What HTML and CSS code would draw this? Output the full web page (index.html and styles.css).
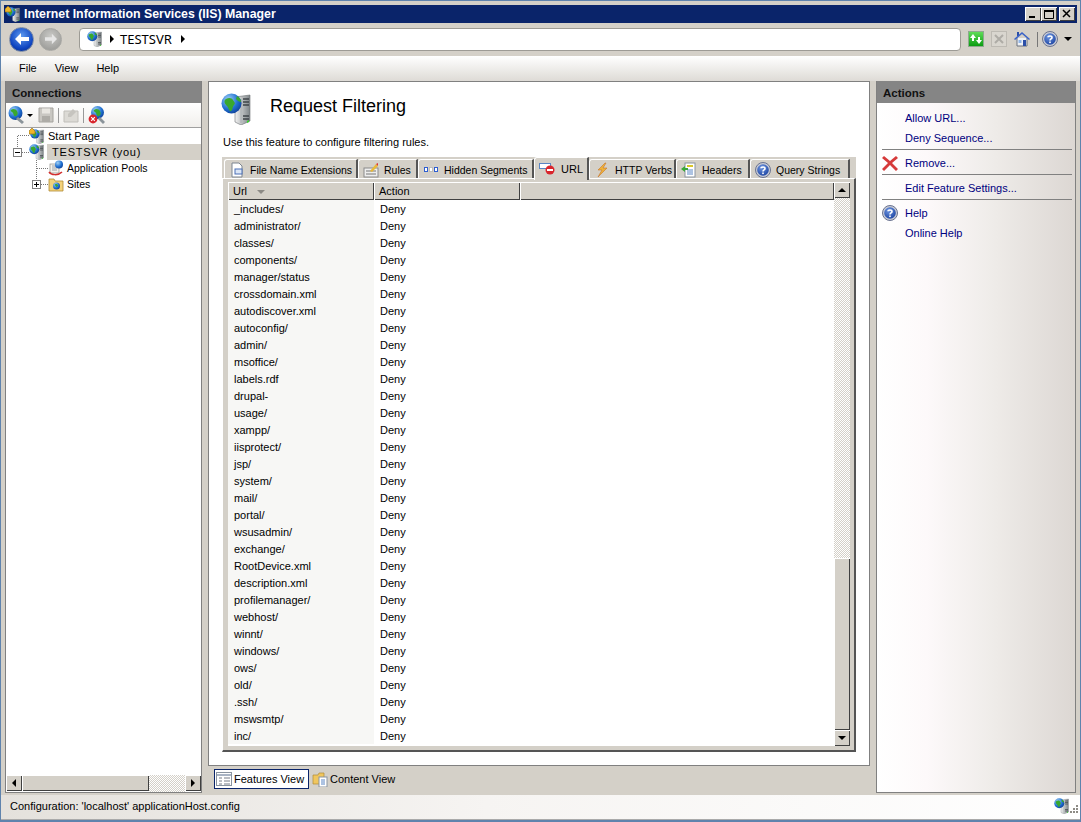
FILE: index.html
```html
<!DOCTYPE html>
<html lang="en">
<head>
    <meta charset="UTF-8">
    <title>Internet Information Services (IIS) Manager</title>
    <link rel="stylesheet" href="styles.css">
</head>
<body>
    <!-- Shared icons -->
    <svg class="icon-defs" width="0" height="0">
        <defs>
            <linearGradient id="serverFill" x1="0" x2="1" y1="0" y2="0">
                <stop offset="0" stop-color="#f2f2f2"/>
                <stop offset="1" stop-color="#7d8487"/>
            </linearGradient>
            <radialGradient id="globeFill" cx="0.35" cy="0.3" r="0.8">
                <stop offset="0" stop-color="#9fd0f5"/>
                <stop offset="0.6" stop-color="#1f6fd0"/>
                <stop offset="1" stop-color="#0c3a90"/>
            </radialGradient>
            <radialGradient id="blueBall" cx="0.4" cy="0.3" r="0.8">
                <stop offset="0" stop-color="#6f96e0"/>
                <stop offset="1" stop-color="#173f9e"/>
            </radialGradient>
            <symbol id="i-server" viewBox="0 0 32 32">
                <path d="M14 4l15-2v26l-9 4-6-3z" fill="url(#serverFill)" stroke="#6b7073" stroke-width=".6"/>
                <path d="M22 6h6M22 9h6M22 12h6M22 23h6M22 26h6" stroke="#3e4448" stroke-width="1.4"/>
                <path d="M20 6v24" stroke="#aab0b3"/>
                <circle cx="10.5" cy="10.5" r="10" fill="url(#globeFill)"/>
                <path d="M5 6c3-2 6-1 7 1s3 3 1 5-1 5-3 6-2-3-4-5-4-5-1-7zM16 3c2 1 4 3 4 6-2 0-4-2-5-3z" fill="#39a82e"/>
                <path d="M26 28l2-1v2l-2 1z" fill="#39d02e"/>
            </symbol>
            <symbol id="i-startpage" viewBox="0 0 16 16">
                <use href="#i-server" x="1" y="1" width="15" height="15"/>
                <path d="M0 3l3-3 3 3v3H0z" fill="#f0b52a" stroke="#8a6a1a" stroke-width=".6"/>
            </symbol>
            <symbol id="i-connect" viewBox="0 0 18 18">
                <circle cx="7.5" cy="7" r="7" fill="url(#globeFill)"/>
                <path d="M3 4c2-2 5-1 6 1s1 4-1 5-2-1-3-3-3-1-2-3z" fill="#39a82e"/>
                <path d="M10 11l6 5-2 2-6-5z" fill="#8b949a"/>
            </symbol>
            <symbol id="i-disconnect" viewBox="0 0 18 18">
                <circle cx="9.5" cy="6.5" r="6.5" fill="url(#globeFill)"/>
                <path d="M6 4c2-2 5-1 6 1s1 4-1 5-2-1-3-3-3-1-2-3z" fill="#39a82e"/>
                <path d="M12 11l5 5-2 2-5-5z" fill="#8b949a"/>
                <circle cx="5" cy="13" r="4.4" fill="#d8252c"/>
                <path d="M3.2 11.2l3.6 3.6m0-3.6l-3.6 3.6" stroke="#fff" stroke-width="1.2"/>
            </symbol>
            <symbol id="i-help" viewBox="0 0 16 16">
                <circle cx="8" cy="8" r="7.5" fill="#c9ccd6" stroke="#6a7390"/>
                <circle cx="8" cy="8" r="5.8" fill="url(#blueBall)"/>
                <path d="M6 6.2C6 4.6 10 4.4 10 6.4 10 8 8 7.800 8 9.500" fill="none" stroke="#fff" stroke-width="1.6"/>
                <rect x="7.200" y="10.500" width="1.600" height="1.600" fill="#fff"/>
            </symbol>
            <symbol id="i-apppools" viewBox="0 0 16 16">
                <rect x="2" y="4" width="9" height="9" fill="#f4f2ec" stroke="#8d8d88" stroke-width=".7"/>
                <path d="M4 6h5M4 8h5M4 10h5" stroke="#9aa3ad"/>
                <circle cx="11" cy="4.500" r="4" fill="url(#globeFill)"/>
                <path d="M1 12c2 3 9 4 13 0" fill="none" stroke="#d32f2f" stroke-width="1.500"/>
            </symbol>
            <symbol id="i-sites" viewBox="0 0 16 16">
                <path d="M1 3h5l1 2h8v10H1z" fill="#f3d27b" stroke="#b08a35" stroke-width=".8"/>
                <circle cx="8.500" cy="10" r="3.500" fill="url(#globeFill)"/>
                <path d="M7 8.500c1-1 3 0 3 1s-2 2-2 1-2-1-1-2z" fill="#39a82e"/>
            </symbol>
        </defs>
    </svg>

    <div class="window">
        <header class="title-bar">
            <svg class="title-icon"><use href="#i-startpage"/></svg>
            <span class="title-text">Internet Information Services (IIS) Manager</span>
            <div class="window-buttons">
                <button class="win-btn"><svg width="10" height="10"><rect x="1" y="7" width="6" height="2" fill="#000"/></svg></button>
                <button class="win-btn"><svg width="12" height="10"><path d="M1.500 1.500h9v8h-9z" fill="none" stroke="#000"/><rect x="1" y="1" width="10" height="2"/></svg></button>
                <button class="win-btn win-close"><svg width="10" height="10"><path d="M1 1l7 7m0-7L1 8" stroke="#000" stroke-width="1.500"/></svg></button>
            </div>
        </header>

        <div class="nav-bar">
            <div class="nav-arrows">
                <div class="nav-round nav-back">
                    <svg width="16" height="14" viewBox="0 0 16 14"><path d="M7 1L1 7l6 6V9h8V5H7z" fill="#fff"/></svg>
                </div>
                <div class="nav-round nav-forward">
                    <svg width="14" height="12" viewBox="0 0 16 14"><path d="M9 1l6 6-6 6V9H1V5h8z" fill="#e6e6e6"/></svg>
                </div>
            </div>
            <div class="address">
                <svg class="icon16"><use href="#i-server"/></svg>
                <span class="crumb-arrow"></span>
                <span class="crumb">TESTSVR</span>
                <span class="crumb-arrow"></span>
            </div>
            <div class="nav-tools">
                <div class="tool-refresh">
                    <svg width="14" height="12" viewBox="0 0 14 12"><path d="M1 5l3-4 3 4H5v3H3V5zM7 7h2V4h2v3h2l-3 4z" fill="#fff"/></svg>
                </div>
                <div class="tool-stop">
                    <svg width="10" height="10"><path d="M1 1l8 8m0-8L1 9" stroke="#aeaca6" stroke-width="2"/></svg>
                </div>
                <svg class="tool-home" width="16" height="16" viewBox="0 0 16 16">
                    <rect x="3" y="1" width="2" height="4" fill="#2b4fa8"/>
                    <path d="M3 7v8h10V7" fill="#eef1f6" stroke="#68717f"/>
                    <path d="M0 8l8-7 8 7-1 1-7-6-7 6z" fill="#3a62c8"/>
                    <rect x="9" y="9" width="3" height="6" fill="#2b4fa8"/>
                    <rect x="4.500" y="9" width="3" height="3" fill="#8fb5e8"/>
                </svg>
                <span class="tool-sep"></span>
                <svg class="icon16"><use href="#i-help"/></svg>
                <span class="caret-down"></span>
            </div>
        </div>

        <nav class="menu-bar">
            <span class="menu-item">File</span>
            <span class="menu-item">View</span>
            <span class="menu-item">Help</span>
        </nav>

        <div class="main">
            <aside class="connections">
                <h2 class="panel-head">Connections</h2>
                <div class="conn-toolbar">
                    <svg class="conn-icon"><use href="#i-connect"/></svg>
                    <span class="caret-down caret-small"></span>
                    <svg class="save-icon" width="16" height="16" viewBox="0 0 16 16">
                        <path d="M1 1h14v14H1z" fill="#c9c7c2" stroke="#a5a39e"/>
                        <rect x="4" y="1.500" width="8" height="5" fill="#e8e6e1"/>
                        <rect x="4" y="9" width="8" height="6" fill="#aeaca7"/>
                    </svg>
                    <span class="conn-sep"></span>
                    <svg class="save-icon" width="16" height="16" viewBox="0 0 16 16">
                        <path d="M1 4h14v11H1z" fill="#dcdad5" stroke="#c0beb9"/>
                        <path d="M5 7l5-5 3 3-5 5H5z" fill="#c6c4bf"/>
                    </svg>
                    <span class="conn-sep"></span>
                    <svg class="conn-icon"><use href="#i-disconnect"/></svg>
                </div>
                <div class="tree">
                    <div class="tree-row">
                        <svg class="tree-gutter" width="23" height="16"><path d="M11.500 8v8M12 7.500h11" stroke="#777" stroke-dasharray="1 1"/></svg>
                        <svg class="icon16"><use href="#i-startpage"/></svg>
                        <span class="tree-label">Start Page</span>
                    </div>
                    <div class="tree-row">
                        <svg class="tree-gutter" width="23" height="16">
                            <path d="M11.500 0v4M16 8.500h7" stroke="#777" stroke-dasharray="1 1"/>
                            <rect x="7.500" y="4.500" width="8" height="8" fill="#fff" stroke="#808080"/>
                            <path d="M9 8.500h5" stroke="#000"/>
                        </svg>
                        <svg class="icon16"><use href="#i-server"/></svg>
                        <span class="tree-label tree-selected">TESTSVR (you)</span>
                    </div>
                    <div class="tree-row">
                        <svg class="tree-gutter" width="42" height="16"><path d="M30.500 0v16M31 8.500h11" stroke="#777" stroke-dasharray="1 1"/></svg>
                        <svg class="icon16"><use href="#i-apppools"/></svg>
                        <span class="tree-label">Application Pools</span>
                    </div>
                    <div class="tree-row">
                        <svg class="tree-gutter" width="42" height="16">
                            <path d="M30.500 0v4M35 8.500h7" stroke="#777" stroke-dasharray="1 1"/>
                            <rect x="26.500" y="4.500" width="8" height="8" fill="#fff" stroke="#808080"/>
                            <path d="M28 8.500h5M30.500 6v5" stroke="#000"/>
                        </svg>
                        <svg class="icon16"><use href="#i-sites"/></svg>
                        <span class="tree-label">Sites</span>
                    </div>
                </div>
                <div class="hscroll">
                    <span class="sb-btn"><span class="arrow-left"></span></span>
                    <span class="hscroll-thumb"></span>
                    <span class="sb-track"></span>
                    <span class="sb-btn"><span class="arrow-right"></span></span>
                </div>
            </aside>

            <div class="center">
                <section class="feature">
                    <div class="feature-head">
                        <svg class="feature-icon"><use href="#i-server"/></svg>
                        <h1>Request Filtering</h1>
                    </div>
                    <p class="feature-desc">Use this feature to configure filtering rules.</p>
                    <div class="tabs">
                        <div class="tab">
                            <svg class="icon16" viewBox="0 0 16 16"><path d="M3 1h7l3 3v11H3z" fill="#fff" stroke="#7d8590"/><rect x="6" y="7" width="7" height="5" fill="#dbe6f6" stroke="#4a6fb5"/></svg>
                            File Name Extensions
                        </div>
                        <div class="tab">
                            <svg class="icon16" viewBox="0 0 16 16"><rect x="1" y="6" width="14" height="9" fill="#eee" stroke="#8a8a8a"/><path d="M3 9h10M3 12h10" stroke="#777"/><path d="M7 9l6-7 2 2-6 6z" fill="#e8b93a"/><path d="M13 2l2-1v3z" fill="#d33"/></svg>
                            Rules
                        </div>
                        <div class="tab">
                            <svg class="icon16" viewBox="0 0 16 16"><rect x="1.500" y="5.500" width="3" height="4" fill="#fff" stroke="#2f5fd0"/><rect x="6.500" y="5.500" width="3" height="4" fill="#fff" stroke="#999" stroke-dasharray="1 1"/><rect x="11.500" y="5.500" width="3" height="4" fill="#fff" stroke="#2f5fd0"/></svg>
                            Hidden Segments
                        </div>
                        <div class="tab tab-active">
                            <svg class="icon16" viewBox="0 0 16 16"><rect x="0.500" y="2.500" width="11" height="5" fill="#fff" stroke="#5a86c5"/><circle cx="11" cy="9" r="4.500" fill="#d9252c"/><rect x="8" y="8" width="6" height="2" fill="#fff"/></svg>
                            URL
                        </div>
                        <div class="tab">
                            <svg class="icon16" viewBox="0 0 16 16"><path d="M11 1L4 8h4l-4 7 9-9H9l3-5z" fill="#eeb33a" stroke="#c9752a" stroke-width=".6"/></svg>
                            HTTP Verbs
                        </div>
                        <div class="tab">
                            <svg class="icon16" viewBox="0 0 16 16"><rect x="4" y="1" width="10" height="14" fill="#fff" stroke="#8a94a0"/><path d="M6 4h6" stroke="#d9c62a" stroke-width="2"/><path d="M6 8h6M6 10h6M6 12h6" stroke="#5a86c5"/><path d="M0 7l4-3v2h3v2H4v2z" fill="#3aa83a"/></svg>
                            Headers
                        </div>
                        <div class="tab">
                            <svg class="icon16"><use href="#i-help"/></svg>
                            Query Strings
                        </div>
                    </div>
                    <div class="tab-body">
                        <div class="list">
                            <div class="list-main">
                                <table class="rules">
                                    <thead>
                                        <tr>
                                            <th class="col-url">Url <span class="sort-arrow"></span></th>
                                            <th class="col-action">Action</th>
                                            <th></th>
                                        </tr>
                                    </thead>
                                    <tbody>
                                        <tr><td class="col-url">_includes/</td><td>Deny</td><td></td></tr>
                                        <tr><td class="col-url">administrator/</td><td>Deny</td><td></td></tr>
                                        <tr><td class="col-url">classes/</td><td>Deny</td><td></td></tr>
                                        <tr><td class="col-url">components/</td><td>Deny</td><td></td></tr>
                                        <tr><td class="col-url">manager/status</td><td>Deny</td><td></td></tr>
                                        <tr><td class="col-url">crossdomain.xml</td><td>Deny</td><td></td></tr>
                                        <tr><td class="col-url">autodiscover.xml</td><td>Deny</td><td></td></tr>
                                        <tr><td class="col-url">autoconfig/</td><td>Deny</td><td></td></tr>
                                        <tr><td class="col-url">admin/</td><td>Deny</td><td></td></tr>
                                        <tr><td class="col-url">msoffice/</td><td>Deny</td><td></td></tr>
                                        <tr><td class="col-url">labels.rdf</td><td>Deny</td><td></td></tr>
                                        <tr><td class="col-url">drupal-</td><td>Deny</td><td></td></tr>
                                        <tr><td class="col-url">usage/</td><td>Deny</td><td></td></tr>
                                        <tr><td class="col-url">xampp/</td><td>Deny</td><td></td></tr>
                                        <tr><td class="col-url">iisprotect/</td><td>Deny</td><td></td></tr>
                                        <tr><td class="col-url">jsp/</td><td>Deny</td><td></td></tr>
                                        <tr><td class="col-url">system/</td><td>Deny</td><td></td></tr>
                                        <tr><td class="col-url">mail/</td><td>Deny</td><td></td></tr>
                                        <tr><td class="col-url">portal/</td><td>Deny</td><td></td></tr>
                                        <tr><td class="col-url">wsusadmin/</td><td>Deny</td><td></td></tr>
                                        <tr><td class="col-url">exchange/</td><td>Deny</td><td></td></tr>
                                        <tr><td class="col-url">RootDevice.xml</td><td>Deny</td><td></td></tr>
                                        <tr><td class="col-url">description.xml</td><td>Deny</td><td></td></tr>
                                        <tr><td class="col-url">profilemanager/</td><td>Deny</td><td></td></tr>
                                        <tr><td class="col-url">webhost/</td><td>Deny</td><td></td></tr>
                                        <tr><td class="col-url">winnt/</td><td>Deny</td><td></td></tr>
                                        <tr><td class="col-url">windows/</td><td>Deny</td><td></td></tr>
                                        <tr><td class="col-url">ows/</td><td>Deny</td><td></td></tr>
                                        <tr><td class="col-url">old/</td><td>Deny</td><td></td></tr>
                                        <tr><td class="col-url">.ssh/</td><td>Deny</td><td></td></tr>
                                        <tr><td class="col-url">mswsmtp/</td><td>Deny</td><td></td></tr>
                                        <tr><td class="col-url">inc/</td><td>Deny</td><td></td></tr>
                                    </tbody>
                                </table>
                            </div>
                            <div class="vscroll">
                                <span class="sb-btn"><span class="arrow-up"></span></span>
                                <span class="sb-track"></span>
                                <span class="vscroll-thumb"></span>
                                <span class="sb-btn"><span class="arrow-down"></span></span>
                            </div>
                        </div>
                    </div>
                </section>
                <div class="view-tabs">
                    <div class="view-tab view-tab-active">
                        <svg class="icon16" viewBox="0 0 16 16"><rect x="0.500" y="1.500" width="15" height="13" fill="#fff" stroke="#8a94a0"/><path d="M1 4h14" stroke="#a9b4c4" stroke-width="2"/><path d="M3 7h3M3 10h3M3 13h3M8 7h6M8 10h6M8 13h6" stroke="#767d88"/></svg>
                        Features View
                    </div>
                    <div class="view-tab">
                        <svg class="icon16" viewBox="0 0 16 16"><path d="M1 4h5l1-2h5v11H1z" fill="#f0c65e" stroke="#b08a35" stroke-width=".7"/><rect x="7" y="6" width="8" height="10" fill="#fff" stroke="#8a94a0"/><path d="M9 9h4M9 11h4M9 13h4" stroke="#5a86c5"/></svg>
                        Content View
                    </div>
                </div>
            </div>

            <aside class="actions">
                <h2 class="panel-head">Actions</h2>
                <ul class="action-list">
                    <li class="action">Allow URL...</li>
                    <li class="action">Deny Sequence...</li>
                    <li class="action-sep"></li>
                    <li class="action">
                        <svg class="action-icon" viewBox="0 0 16 16"><path d="M2 1l6 5 6-5 2 2-6 5 6 6-2 2-6-6-6 6-2-2 6-6-6-5z" fill="#d63a3a"/></svg>
                        Remove...
                    </li>
                    <li class="action-sep"></li>
                    <li class="action">Edit Feature Settings...</li>
                    <li class="action-sep"></li>
                    <li class="action">
                        <svg class="action-icon"><use href="#i-help"/></svg>
                        Help
                    </li>
                    <li class="action">Online Help</li>
                </ul>
            </aside>
        </div>

        <footer class="status-bar">
            <span class="status-text">Configuration: 'localhost' applicationHost.config</span>
            <svg class="icon16"><use href="#i-server"/></svg>
            <svg class="grip" width="9" height="10"><path d="M6 1h2v2H6zM3 4h2v2H3zM6 4h2v2H6zM0 7h2v2H0zM3 7h2v2H3zM6 7h2v2H6z" fill="#8e8c86"/></svg>
        </footer>
    </div>
</body>
</html>
```

FILE: styles.css
```css
:root {
    --face: #d4d0c8;
    --head: #858585;
    --line: #808080;
    --dark: #404040;
    --navy: #0a246a;
    --link: #000080;
}

* {
    box-sizing: border-box;
}

html, body {
    margin: 0;
    padding: 0;
}

body {
    font-family: "Liberation Sans", Arial, sans-serif;
    font-size: 11px;
    line-height: 16px;
    color: #000;
}

.icon-defs {
    position: absolute;
}

.icon16 {
    width: 16px;
    height: 16px;
    flex: none;
}

.window {
    width: 1081px;
    height: 822px;
    padding: 4px 3px 0;
    background: var(--face);
    border: 1px solid #5f83ad;
    border-bottom-width: 2px;
    display: flex;
    flex-direction: column;
    overflow: hidden;
}

/* Title bar */
.title-bar {
    height: 18px;
    flex: none;
    background: var(--navy);
    color: #fff;
    display: flex;
    align-items: center;
}

.title-icon {
    width: 16px;
    height: 16px;
    margin: 0 3px 0 1px;
}

.title-text {
    font-weight: bold;
    font-size: 12.350px;
    flex: 1;
}

.window-buttons {
    display: flex;
    padding-right: 2px;
}

.win-btn {
    width: 16px;
    height: 14px;
    padding: 0;
    border: none;
    background: var(--face);
    box-shadow: inset 1px 1px #fff, inset -1px -1px #404040;
    display: flex;
    align-items: center;
    justify-content: center;
}

.win-close {
    margin-left: 2px;
}

/* Back/forward and address */
.nav-bar {
    height: 33px;
    flex: none;
    display: flex;
    align-items: center;
    padding: 0 0 1px 5px;
}

.nav-arrows {
    width: 70px;
    display: flex;
    align-items: center;
}

.nav-round {
    border-radius: 50%;
    display: flex;
    align-items: center;
    justify-content: center;
}

.nav-back {
    width: 25px;
    height: 25px;
    background: radial-gradient(circle at 50% 35%, #5f9bf0, #0e44c0 65%, #0a2a78);
    border: 1px solid #7c8ba5;
}

.nav-forward {
    width: 23px;
    height: 23px;
    margin-left: 5px;
    background: radial-gradient(circle at 50% 35%, #c9c9c6, #92928f);
    border: 1px solid #a7a7a3;
}

.address {
    width: 882px;
    height: 23px;
    background: #fff;
    border: 1px solid #9d9b95;
    border-radius: 4px;
    display: flex;
    align-items: center;
    padding-left: 7px;
    font-family: "Noto Sans", sans-serif;
    font-size: 13px;
}

.crumb {
    margin-right: 9px;
}

.crumb-arrow {
    width: 0;
    height: 0;
    margin: 0 6px 0 7px;
    border-left: 4px solid #000;
    border-top: 4px solid transparent;
    border-bottom: 4px solid transparent;
}

.crumb + .crumb-arrow {
    margin-left: 0;
}

.nav-tools {
    flex: 1;
    display: flex;
    align-items: center;
    padding-left: 7px;
}

.tool-refresh, .tool-stop {
    width: 16px;
    height: 16px;
    display: flex;
    align-items: center;
    justify-content: center;
    margin-right: 7px;
}

.tool-refresh {
    background: linear-gradient(#5fdc58, #0c9c12);
    border: 1px solid #8fa88f;
}

.tool-stop {
    background: #d9d6cf;
    border: 1px solid #bdbab3;
}

.tool-sep {
    width: 1px;
    height: 15px;
    background: #777;
    margin: 0 4px 0 7px;
}

.caret-down {
    width: 0;
    height: 0;
    margin-left: 6px;
    border-top: 4px solid #000;
    border-left: 4px solid transparent;
    border-right: 4px solid transparent;
}

.caret-small {
    margin: 0 5px 0 1px;
    border-width: 3px 3px 0;
}

/* Menu */
.menu-bar {
    height: 25px;
    flex: none;
    margin: 0 -3px;
    padding: 0 0 2px 18px;
    background: linear-gradient(#fff, #dedbd6);
    display: flex;
    align-items: center;
    gap: 18px;
}

/* Panels */
.main {
    flex: none;
    height: 712px;
    margin-left: 1px;
    display: flex;
    gap: 6px;
}

.panel-head {
    height: 22px;
    margin: 0;
    padding-left: 6px;
    background: var(--head);
    color: #111;
    font-size: 11.500px;
    line-height: 24px;
    font-weight: bold;
}

.connections {
    width: 197px;
    display: flex;
    flex-direction: column;
    background: #fff;
    border: 1px solid var(--line);
    border-top: none;
}

.conn-toolbar {
    height: 25px;
    display: flex;
    align-items: center;
    padding-left: 2px;
    background: linear-gradient(#fff, #f1efec);
    border-bottom: 1px solid #a0a0a0;
}

.conn-icon {
    width: 18px;
    height: 18px;
    flex: none;
}

.save-icon {
    flex: none;
}

.conn-sep {
    width: 1px;
    height: 15px;
    margin: 0 4px;
    background: #999;
}

.tree {
    flex: 1;
}

.tree-row {
    height: 16px;
    display: flex;
    align-items: center;
}

.tree-gutter {
    flex: none;
}

.tree-label {
    margin-left: 3px;
}

.tree-row:nth-child(n+3) .tree-label {
    font-size: 10.500px;
}

.tree-selected {
    flex: 1;
    margin-left: 2px;
    padding-left: 5px;
    background: var(--face);
    letter-spacing: .8px;
}

.hscroll {
    height: 17px;
    display: flex;
}

.sb-btn {
    width: 16px;
    height: 16px;
    flex: none;
    background: var(--face);
    box-shadow: inset 1px 1px #fff, inset -1px -1px #404040;
    display: flex;
    align-items: center;
    justify-content: center;
}

.sb-track {
    flex: 1;
    background: repeating-conic-gradient(#d4d0c8 0 25%, #fff 0 50%) 0 0 / 2px 2px;
}

.hscroll-thumb {
    width: 127px;
    height: 16px;
    background: var(--face);
    box-shadow: inset 1px 1px #fff, inset -1px -1px #404040;
}

.arrow-left, .arrow-right, .arrow-up, .arrow-down {
    width: 0;
    height: 0;
    border: 4px solid transparent;
}

.arrow-left {
    border-right-color: #000;
    border-left-width: 0;
}

.arrow-right {
    border-left-color: #000;
    border-right-width: 0;
}

.arrow-up {
    border-bottom-color: #000;
    border-top-width: 0;
}

.arrow-down {
    border-top-color: #000;
    border-bottom-width: 0;
}

/* Center */
.center {
    width: 662px;
    display: flex;
    flex-direction: column;
}

.feature {
    height: 685px;
    background: #fff;
    border: 1px solid var(--line);
    padding: 11px 13px 0;
    display: flex;
    flex-direction: column;
}

.feature-head {
    height: 32px;
    display: flex;
    align-items: center;
    gap: 17px;
    margin-left: -1px;
}

.feature-icon {
    width: 32px;
    height: 32px;
}

.feature-head h1 {
    margin: 0 0 6px;
    font-size: 18px;
    font-weight: normal;
    line-height: 24px;
}

.feature-desc {
    margin: 9px 0 0 1px;
    height: 16px;
}

.tabs {
    margin-top: 7px;
    height: 21px;
    padding: 1px 0 0 2px;
    display: grid;
    grid-template-columns: 134px 60px 116px 55px 87px 74px 100px;
    background: var(--face);
    width: 634px;
    font-size: 10.500px;
}

.tab {
    height: 19px;
    margin-top: 1px;
    display: flex;
    align-items: center;
    gap: 5px;
    padding: 1px 0 0 4px;
    white-space: nowrap;
    background: var(--face);
    border-top: 1px solid #fff;
    border-left: 1px solid #fff;
    border-right: 2px solid #555;
    border-top-left-radius: 3px;
}

.tab-active {
    margin-top: -1px;
    height: 23px;
    position: relative;
    gap: 6px;
    padding-top: 0;
    font-size: 11px;
}

.tab-body {
    width: 634px;
    height: 574px;
    padding: 3px 4px 6px 5px;
    background: var(--face);
    border-top: 1px solid #fff;
    border-right: 2px solid #555;
    border-bottom: 2px solid #555;
    border-left: 1px solid #fff;
}

.list {
    height: 564px;
    display: flex;
    background: #fff;
}

.list-main {
    flex: 1;
}

.rules {
    border-collapse: collapse;
    table-layout: fixed;
    width: 606px;
}

.rules th {
    height: 18px;
    padding: 0 0 0 5px;
    text-align: left;
    font-weight: normal;
    background: var(--face);
    box-shadow: inset 1px 1px #fff, inset -1px -1px #404040;
}

.rules td {
    height: 17px;
    padding: 0 0 0 6px;
    white-space: nowrap;
}

td.col-url {
    background: #f7f7f5;
}

.col-url {
    width: 146px;
}

.col-action {
    width: 146px;
}

.sort-arrow {
    display: inline-block;
    margin-left: 7px;
    vertical-align: middle;
    border-top: 4px solid #8c8a85;
    border-left: 4px solid transparent;
    border-right: 4px solid transparent;
}

.vscroll {
    width: 16px;
    display: flex;
    flex-direction: column;
}

.vscroll-thumb {
    height: 172px;
    flex: none;
    background: var(--face);
    box-shadow: inset 1px 1px #fff, inset -1px -1px #404040;
}

.view-tabs {
    flex: 1;
    display: flex;
    align-items: flex-start;
    padding: 3px 0 0 6px;
    gap: 2px;
}

.view-tab {
    height: 20px;
    display: flex;
    align-items: center;
    gap: 2px;
    padding: 0 1px;
}

.view-tab-active {
    width: 95px;
    background: #fff;
    border: 1px solid var(--navy);
}

/* Actions */
.actions {
    width: 200px;
    border: 1px solid var(--line);
    border-top: none;
    background: linear-gradient(90deg, #fff 0, #fdf9fa 25%, #eeebe8 60%, #dcd7d3 100%);
}

.action-list {
    margin: 0;
    padding: 5px 3px 0 5px;
    list-style: none;
}

.action {
    height: 20px;
    display: flex;
    align-items: center;
    padding-left: 23px;
    color: var(--link);
}

.action-icon {
    width: 16px;
    height: 16px;
    flex: none;
    margin: 0 7px 0 -23px;
}

.action-sep {
    height: 1px;
    margin: 1px 0 3px;
    background: var(--line);
}

/* Status bar */
.status-bar {
    height: 25px;
    flex: none;
    margin: 2px -3px 0;
    padding: 0 1px 2px 9px;
    background: linear-gradient(90deg, #e4e1dc, #f6f4f2 45%, #fff 100%);
    border-bottom: 1px solid #aaa;
    display: flex;
    align-items: center;
}

.status-text {
    flex: 1;
}

.grip {
    margin-top: 6px;
}
```
